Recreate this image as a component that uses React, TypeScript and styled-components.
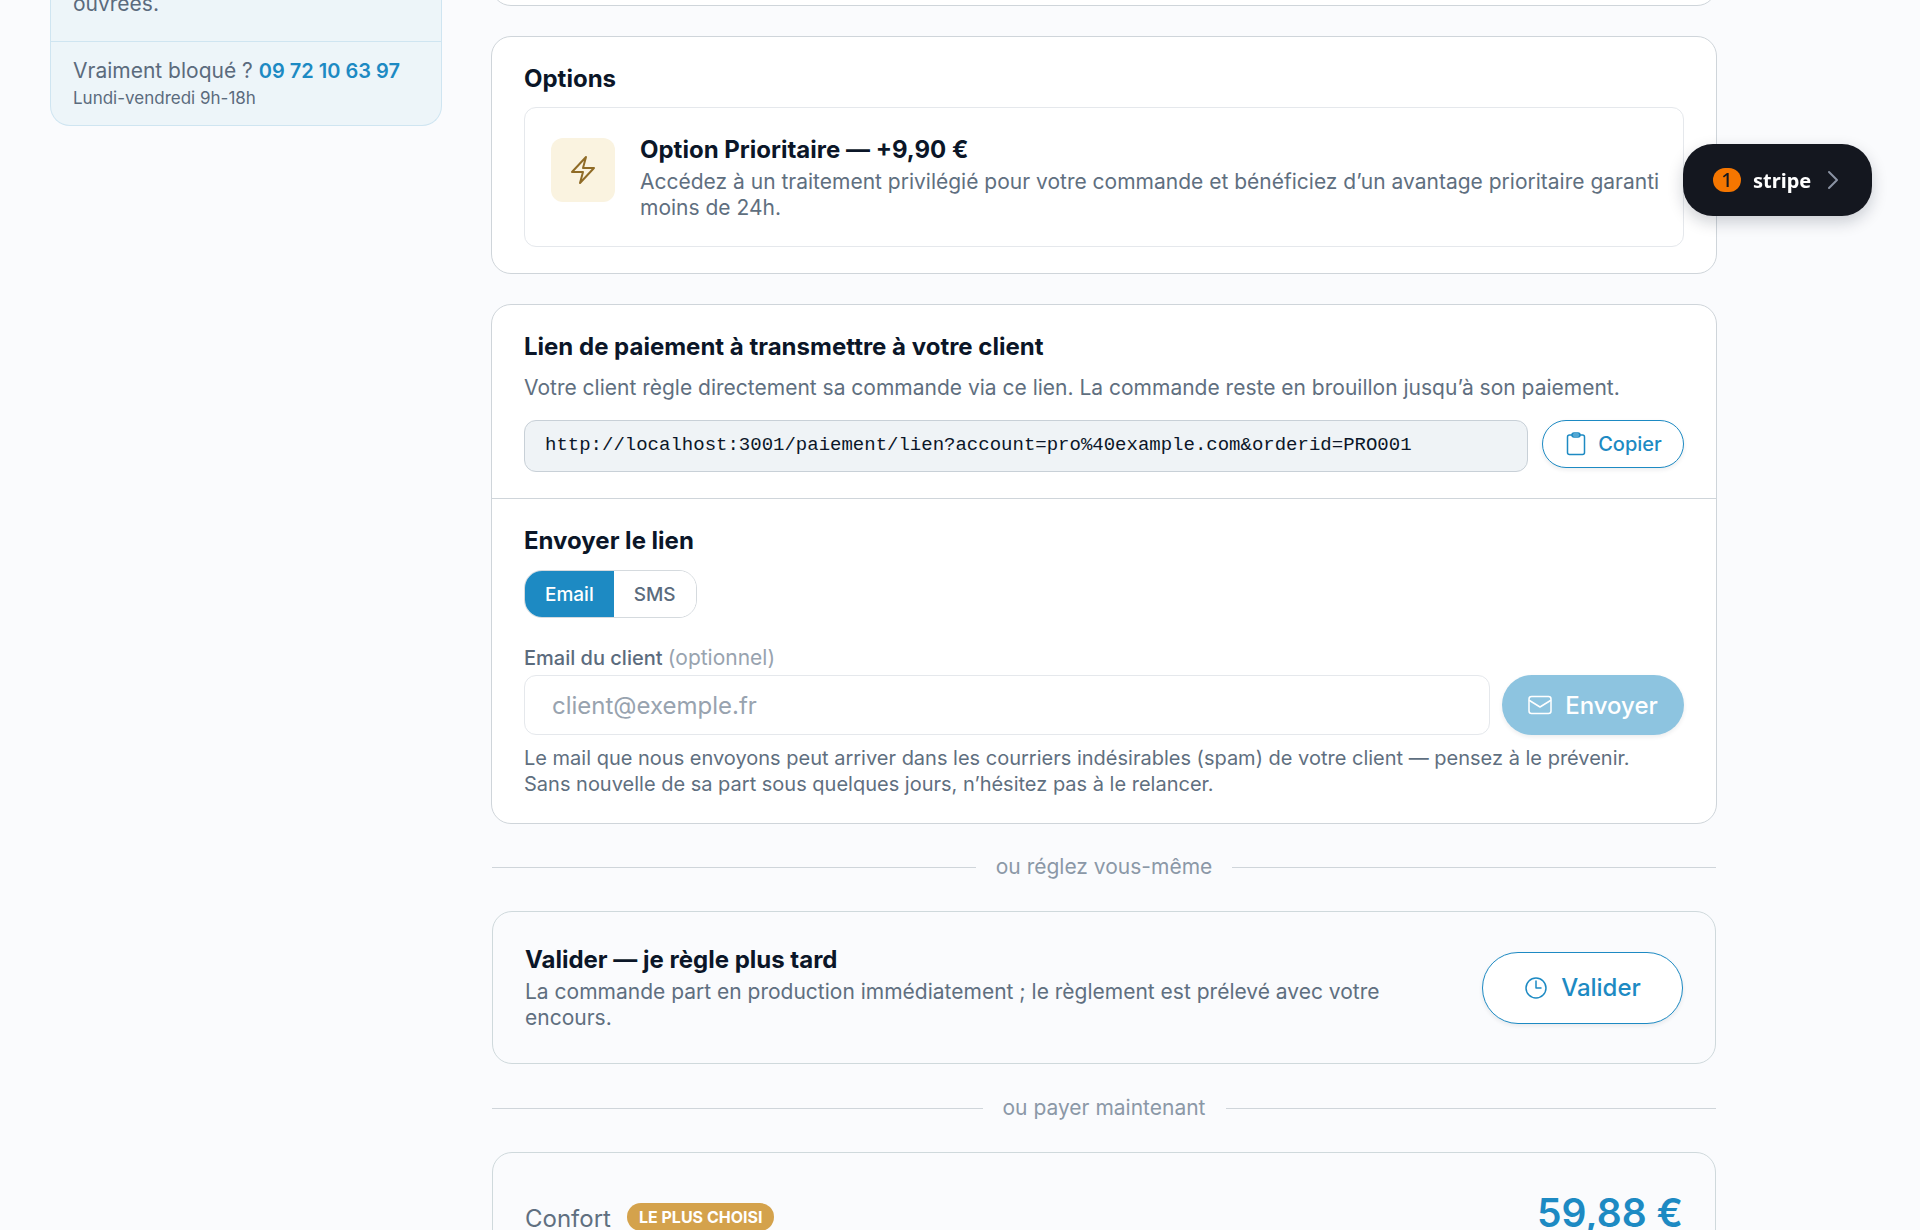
import React, { useState } from "react";
import styled, { createGlobalStyle } from "styled-components";

const GlobalStyle = createGlobalStyle`
  *, *::before, *::after { box-sizing: border-box; }
  body {
    margin: 0;
    background: #fafbfd;
    color: #0b1628;
    font-family: Inter, "Liberation Sans", sans-serif;
    font-size: 21px;
    line-height: 26px;
  }
  h2, h3, p { margin: 0; }
  button, input { font-family: inherit; }
`;

const Page = styled.div`
  position: relative;
  display: grid;
  grid-template-columns: 392px minmax(0, 1226px);
  column-gap: 49px;
  align-items: start;
  height: 100vh;
  padding: 0 50px;
  overflow: hidden;
`;

const HelpCard = styled.aside`
  margin-top: -9px;
  border: 1px solid #cfe5f1;
  border-top: 0;
  border-radius: 0 0 20px 20px;
  background: #edf5f9;
  color: #5b6b7d;
`;

const HelpText = styled.p`
  padding: 0 22px 24px;
`;

const HelpContact = styled.div`
  padding: 16px 22px;
  border-top: 1px solid #cfe5f1;
`;

const Phone = styled.a`
  color: #1d8ac3;
  font-size: 20px;
  font-weight: 600;
  text-decoration: none;
`;

const Hours = styled.p`
  margin-top: 3px;
  font-size: 17px;
  line-height: 22px;
`;

const Column = styled.main`
  display: flex;
  flex-direction: column;
`;

const Card = styled.section`
  margin-bottom: 30px;
  border: 1px solid #cfd5da;
  border-radius: 20px;
  background: #fff;
`;

const PreviousCard = styled(Card)`
  height: 60px;
  margin-top: -54px;
`;

const CardSection = styled.div`
  padding: 26px 32px;

  & + & {
    border-top: 1px solid #cfd5da;
  }
`;

const Title = styled.h2`
  font-size: 24px;
  line-height: 32px;
  font-weight: 700;
`;

const Muted = styled.p`
  color: #5f6f80;
`;

const Note = styled(Muted)`
  font-size: 20px;
`;

const OptionBox = styled.div`
  display: flex;
  align-items: flex-start;
  gap: 25px;
  margin-top: 12px;
  padding: 26px 20px 25px 26px;
  border: 1px solid #e5e8ec;
  border-radius: 12px;
`;

const OptionIcon = styled.div`
  display: flex;
  flex: none;
  align-items: center;
  justify-content: center;
  width: 64px;
  height: 64px;
  margin-top: 4px;
  border-radius: 12px;
  background: #faf3e0;
  color: #8f6b26;
`;

const Stack = styled.div`
  display: grid;
  gap: 3px;
  min-width: 0;
`;

const LinkRow = styled.div`
  display: flex;
  align-items: flex-start;
  gap: 14px;
  margin-top: 19px;
`;

const LinkIntro = styled(Muted)`
  margin-top: 12px;
`;

const LinkField = styled.input`
  flex: 1;
  min-width: 0;
  height: 52px;
  padding: 0 20px 3px;
  border: 1px solid #c8d0d7;
  border-radius: 12px;
  background: #eff3f6;
  color: #0b1628;
  font-family: "Liberation Mono", monospace;
  font-size: 19px;
`;

const Button = styled.button<{ $size: "small" | "medium" | "large"; $filled?: boolean }>`
  display: flex;
  flex: none;
  align-items: center;
  justify-content: center;
  gap: ${(p) => (p.$size === "small" ? 10 : 13)}px;
  width: ${(p) => ({ small: 142, medium: 182, large: 201 })[p.$size]}px;
  height: ${(p) => ({ small: 48, medium: 60, large: 72 })[p.$size]}px;
  padding: 0;
  border: ${(p) => (p.$filled ? "0" : "1px solid #1d8ac3")};
  border-radius: 36px;
  background: ${(p) => (p.$filled ? "#8dc4e0" : "#fff")};
  color: ${(p) => (p.$filled ? "#fff" : "#1d8ac3")};
  font-size: ${(p) => (p.$size === "small" ? 20 : 24)}px;
  font-weight: 500;
  box-shadow: 0 2px 4px rgba(11, 22, 40, 0.08);
  cursor: pointer;
`;

const Toggle = styled.div`
  display: flex;
  width: fit-content;
  height: 48px;
  margin-top: 13px;
  border: 1px solid #d5dade;
  border-radius: 18px;
  overflow: hidden;
`;

const ToggleButton = styled.button<{ $active: boolean }>`
  padding: 0 20px;
  border: 0;
  background: ${(p) => (p.$active ? "#1d8ac3" : "#fff")};
  color: ${(p) => (p.$active ? "#fff" : "#5b6b7d")};
  font-size: 19px;
  font-weight: 500;
  cursor: pointer;
`;

const FieldLabel = styled.label`
  display: block;
  margin-top: 27px;
  color: #5b6b7d;
  font-size: 20px;
  font-weight: 500;
`;

const Optional = styled.span`
  color: #98a3af;
  font-size: 21px;
  font-weight: 400;
`;

const FieldRow = styled.div`
  display: flex;
  gap: 12px;
  margin: 4px 0 10px;
`;

const ContactField = styled.input`
  flex: 1;
  min-width: 0;
  height: 60px;
  padding: 0 27px;
  border: 1px solid #e5e8ec;
  border-radius: 12px;
  background: #fff;
  color: #0b1628;
  font-size: 24px;

  &::placeholder {
    color: #98a3af;
    opacity: 1;
  }
`;

const Divider = styled.div`
  display: flex;
  align-items: center;
  gap: 20px;
  margin: 0 1px 31px;
  color: #8b98a7;

  &::before,
  &::after {
    content: "";
    flex: 1;
    height: 1px;
    background: #cfd5da;
  }
`;

const Choice = styled.section<{ $align?: string }>`
  display: flex;
  align-items: ${(p) => p.$align ?? "center"};
  justify-content: space-between;
  gap: 64px;
  margin: 0 1px 31px;
  padding: 32px;
  border: 1px solid #cfd9dc;
  border-radius: 20px;
`;

const PlanName = styled.div`
  display: flex;
  align-items: flex-start;
  gap: 16px;
  color: #5f6f80;
  font-size: 24px;
  line-height: 32px;
`;

const PlanBadge = styled.span`
  padding: 0 12px;
  border-radius: 14px;
  background: #d4a24c;
  color: #fff;
  font-size: 16px;
  line-height: 28px;
  font-weight: 700;
`;

const Price = styled.strong`
  color: #1d8ac3;
  font-size: 39px;
  line-height: 56px;
  font-weight: 600;
`;

const StripeTag = styled.button`
  position: fixed;
  top: 144px;
  right: 48px;
  display: flex;
  align-items: center;
  width: 189px;
  height: 72px;
  padding: 0 33px 0 30px;
  border: 0;
  border-radius: 30px;
  background: #14171f;
  color: #fff;
  font-family: "Noto Sans", sans-serif;
  font-size: 20px;
  font-weight: 700;
  box-shadow: 0 6px 16px rgba(11, 22, 40, 0.2);
  cursor: pointer;

  svg {
    margin-left: auto;
  }
`;

const StripeCount = styled.span`
  width: 28px;
  margin-right: 12px;
  border-radius: 12px;
  background: #f57600;
  color: #14171f;
  line-height: 24px;
  font-weight: 500;
`;

const Icon = styled.svg`
  flex: none;
  fill: none;
  stroke: currentColor;
  stroke-linecap: round;
  stroke-linejoin: round;
`;

const BoltIcon = () => (
  <Icon width="32" height="32" viewBox="0 0 24 24" strokeWidth="1.5" aria-hidden="true">
    <path d="M3.75 13.5l10.5-11.25L12 10.5h8.25L9.75 21.75 12 13.5H3.75z" />
  </Icon>
);

const ClipboardIcon = () => (
  <Icon width="24" height="24" viewBox="0 0 24 24" strokeWidth="1.5" aria-hidden="true">
    <rect x="3.5" y="3" width="17" height="19.5" rx="2" />
    <rect x="8" y="1" width="8" height="4" rx="2" />
  </Icon>
);

const MailIcon = () => (
  <Icon width="24" height="24" viewBox="0 0 24 24" strokeWidth="1.5" aria-hidden="true">
    <rect x="1" y="3.5" width="22" height="17" rx="2.5" />
    <path d="M1.5 7.5L12 14l10.5-6.5" />
  </Icon>
);

const ClockIcon = () => (
  <Icon width="24" height="24" viewBox="0 0 24 24" strokeWidth="1.5" aria-hidden="true">
    <circle cx="12" cy="12" r="10" />
    <path d="M12 5v7h5" />
  </Icon>
);

const ChevronIcon = () => (
  <Icon width="12" height="20" viewBox="0 0 12 20" strokeWidth="2" aria-hidden="true">
    <path d="M2 2l8 8-8 8" stroke="#8b93a3" />
  </Icon>
);

export default function App() {
  const [channel, setChannel] = useState<"Email" | "SMS">("Email");
  const [contact, setContact] = useState("");

  return (
    <>
      <GlobalStyle />
      <Page>
        <HelpCard>
          <HelpText>ouvrées.</HelpText>
          <HelpContact>
            <p>
              Vraiment bloqué ? <Phone href="tel:0972106397">09 72 10 63 97</Phone>
            </p>
            <Hours>Lundi-vendredi 9h-18h</Hours>
          </HelpContact>
        </HelpCard>

        <Column>
          <PreviousCard />

          <Card>
            <CardSection>
              <Title>Options</Title>
              <OptionBox>
                <OptionIcon>
                  <BoltIcon />
                </OptionIcon>
                <Stack>
                  <Title as="h3">Option Prioritaire — +9,90 €</Title>
                  <Muted>
                    Accédez à un traitement privilégié pour votre commande et bénéficiez d’un avantage prioritaire
                    garanti moins de 24h.
                  </Muted>
                </Stack>
              </OptionBox>
            </CardSection>
          </Card>

          <Card>
            <CardSection>
              <Title>Lien de paiement à transmettre à votre client</Title>
              <LinkIntro>
                Votre client règle directement sa commande via ce lien. La commande reste en brouillon jusqu’à son
                paiement.
              </LinkIntro>
              <LinkRow>
                <LinkField
                  readOnly
                  aria-label="Lien de paiement"
                  value="http://localhost:3001/paiement/lien?account=pro%40example.com&orderid=PRO001"
                />
                <Button type="button" $size="small">
                  <ClipboardIcon />
                  Copier
                </Button>
              </LinkRow>
            </CardSection>
            <CardSection>
              <Title>Envoyer le lien</Title>
              <Toggle>
                <ToggleButton type="button" $active={channel === "Email"} onClick={() => setChannel("Email")}>
                  Email
                </ToggleButton>
                <ToggleButton type="button" $active={channel === "SMS"} onClick={() => setChannel("SMS")}>
                  SMS
                </ToggleButton>
              </Toggle>
              <FieldLabel htmlFor="contact">
                Email du client <Optional>(optionnel)</Optional>
              </FieldLabel>
              <FieldRow>
                <ContactField
                  id="contact"
                  type="email"
                  placeholder="client@exemple.fr"
                  value={contact}
                  onChange={(e) => setContact(e.target.value)}
                />
                <Button type="button" $size="medium" $filled>
                  <MailIcon />
                  Envoyer
                </Button>
              </FieldRow>
              <Note>
                Le mail que nous envoyons peut arriver dans les courriers indésirables (spam) de votre client — pensez à
                le prévenir.
                <br />
                Sans nouvelle de sa part sous quelques jours, n’hésitez pas à le relancer.
              </Note>
            </CardSection>
          </Card>

          <Divider>ou réglez vous-même</Divider>

          <Choice>
            <Stack>
              <Title>Valider — je règle plus tard</Title>
              <Muted>
                La commande part en production immédiatement ; le règlement est prélevé avec votre encours.
              </Muted>
            </Stack>
            <Button type="button" $size="large">
              <ClockIcon />
              Valider
            </Button>
          </Choice>

          <Divider>ou payer maintenant</Divider>

          <Choice $align="baseline">
            <PlanName>
              Confort <PlanBadge>LE PLUS CHOISI</PlanBadge>
            </PlanName>
            <Price>59,88 €</Price>
          </Choice>
        </Column>

        <StripeTag type="button">
          <StripeCount>1</StripeCount>
          stripe
          <ChevronIcon />
        </StripeTag>
      </Page>
    </>
  );
}
